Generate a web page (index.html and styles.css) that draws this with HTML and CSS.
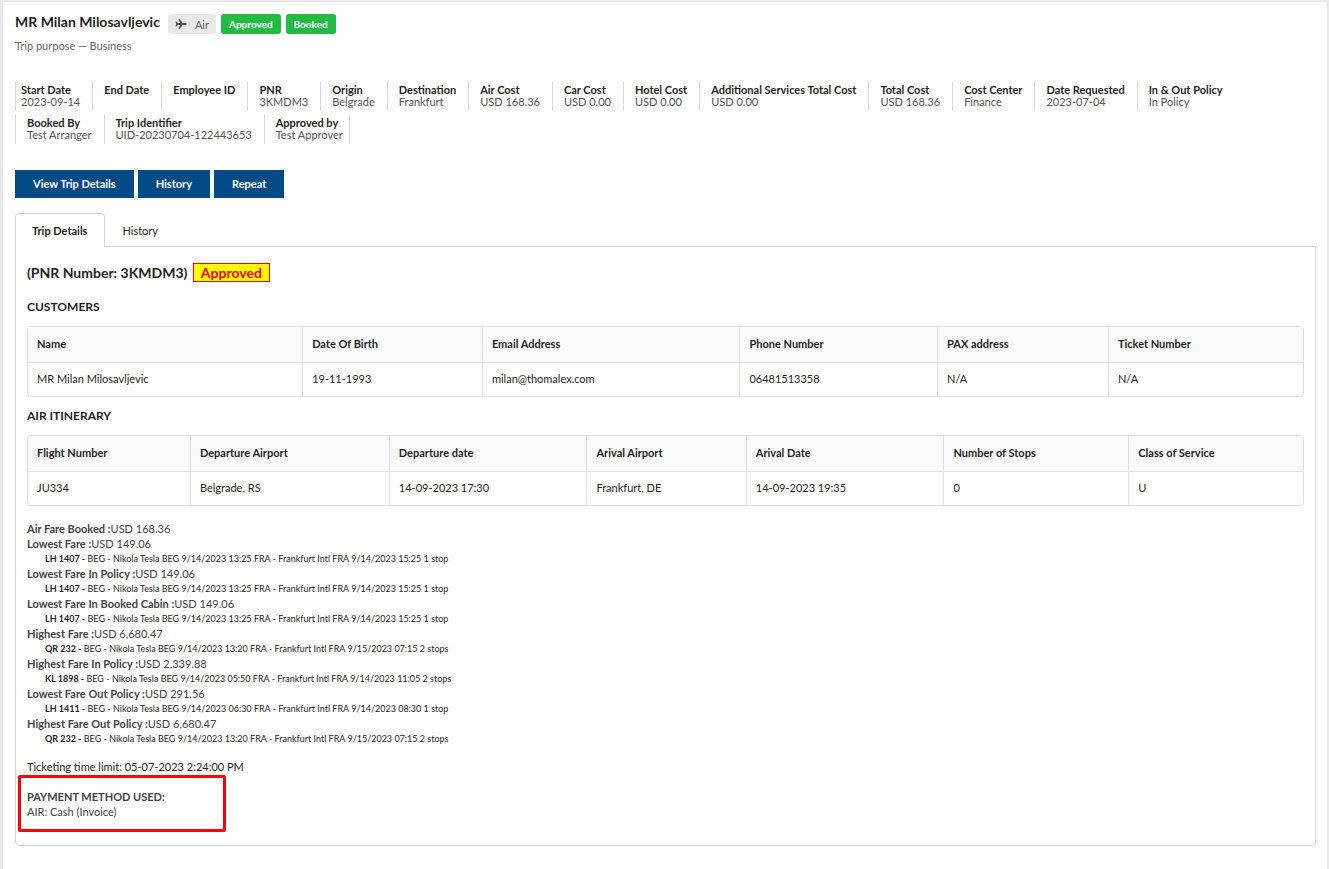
FILE: index.html
```html
<!DOCTYPE html>
<html lang="en">
<head>
  <meta charset="utf-8">
  <title>Trip Details</title>
  <link rel="stylesheet" href="styles.css">
</head>
<body>
  <main class="trip">
    <header class="trip__header">
      <h1 class="trip__name">MR Milan Milosavljevic</h1>
      <span class="label label--type">
        <svg class="label__icon" viewBox="0 0 24 24" aria-hidden="true"><path d="M23.500 12c0-1.200-1.500-2-3.200-2h-5L10 2.500H7.500L9.800 10H5.500L3.200 7H1l1.200 5L1 17h2.200l2.300-3h4.300l-2.300 7.500H10l5.300-7.500h5c1.700 0 3.200-.8 3.200-2z"/></svg>
        Air
      </span>
      <span class="label label--green">Approved</span>
      <span class="label label--green">Booked</span>
    </header>
    <p class="trip__purpose">Trip purpose — Business</p>

    <dl class="summary">
      <div class="summary__item summary__item--first"><dt>Start Date</dt><dd>2023-09-14</dd></div>
      <div class="summary__item"><dt>End Date</dt><dd></dd></div>
      <div class="summary__item"><dt>Employee ID</dt><dd></dd></div>
      <div class="summary__item"><dt>PNR</dt><dd>3KMDM3</dd></div>
      <div class="summary__item"><dt>Origin</dt><dd>Belgrade</dd></div>
      <div class="summary__item"><dt>Destination</dt><dd>Frankfurt</dd></div>
      <div class="summary__item"><dt>Air Cost</dt><dd>USD 168.36</dd></div>
      <div class="summary__item"><dt>Car Cost</dt><dd>USD 0.00</dd></div>
      <div class="summary__item"><dt>Hotel Cost</dt><dd>USD 0.00</dd></div>
      <div class="summary__item"><dt>Additional Services Total Cost</dt><dd>USD 0.00</dd></div>
      <div class="summary__item"><dt>Total Cost</dt><dd>USD 168.36</dd></div>
      <div class="summary__item"><dt>Cost Center</dt><dd>Finance</dd></div>
      <div class="summary__item"><dt>Date Requested</dt><dd>2023-07-04</dd></div>
      <div class="summary__item summary__item--last"><dt>In &amp; Out Policy</dt><dd>In Policy</dd></div>
    </dl>
    <dl class="summary">
      <div class="summary__item summary__item--start"><dt>Booked By</dt><dd>Test Arranger</dd></div>
      <div class="summary__item"><dt>Trip Identifier</dt><dd>UID-20230704-122443653</dd></div>
      <div class="summary__item summary__item--end"><dt>Approved by</dt><dd>Test Approver</dd></div>
    </dl>

    <div class="actions">
      <button class="button" type="button">View Trip Details</button>
      <button class="button" type="button">History</button>
      <button class="button" type="button">Repeat</button>
    </div>

    <nav class="tabs">
      <a class="tabs__item tabs__item--active" href="#details">Trip Details</a>
      <a class="tabs__item" href="#history">History</a>
    </nav>

    <section class="panel" id="details">
      <h2 class="panel__title">(PNR Number: 3KMDM3) <span class="status">Approved</span></h2>

      <h3 class="panel__heading">CUSTOMERS</h3>
      <table class="table table--customers">
        <thead>
          <tr>
            <th>Name</th>
            <th>Date Of Birth</th>
            <th>Email Address</th>
            <th>Phone Number</th>
            <th>PAX address</th>
            <th>Ticket Number</th>
          </tr>
        </thead>
        <tbody>
          <tr>
            <td>MR Milan Milosavljevic</td>
            <td>19-11-1993</td>
            <td>milan@thomalex.com</td>
            <td>06481513358</td>
            <td>N/A</td>
            <td>N/A</td>
          </tr>
        </tbody>
      </table>

      <h3 class="panel__heading">AIR ITINERARY</h3>
      <table class="table table--itinerary">
        <thead>
          <tr>
            <th>Flight Number</th>
            <th>Departure Airport</th>
            <th>Departure date</th>
            <th>Arival Airport</th>
            <th>Arival Date</th>
            <th>Number of Stops</th>
            <th>Class of Service</th>
          </tr>
        </thead>
        <tbody>
          <tr>
            <td>JU334</td>
            <td>Belgrade, RS</td>
            <td>14-09-2023 17:30</td>
            <td>Frankfurt, DE</td>
            <td>14-09-2023 19:35</td>
            <td>0</td>
            <td>U</td>
          </tr>
        </tbody>
      </table>

      <div class="fares">
        <p class="fare"><b>Air Fare Booked :</b>USD 168.36</p>
        <p class="fare"><b>Lowest Fare :</b>USD 149.06</p>
        <p class="flight"><b>LH 1407 -</b> BEG - Nikola Tesla BEG 9/14/2023 13:25 FRA - Frankfurt Intl FRA 9/14/2023 15:25 1 stop</p>
        <p class="fare"><b>Lowest Fare In Policy :</b>USD 149.06</p>
        <p class="flight"><b>LH 1407 -</b> BEG - Nikola Tesla BEG 9/14/2023 13:25 FRA - Frankfurt Intl FRA 9/14/2023 15:25 1 stop</p>
        <p class="fare"><b>Lowest Fare In Booked Cabin :</b>USD 149.06</p>
        <p class="flight"><b>LH 1407 -</b> BEG - Nikola Tesla BEG 9/14/2023 13:25 FRA - Frankfurt Intl FRA 9/14/2023 15:25 1 stop</p>
        <p class="fare"><b>Highest Fare :</b>USD 6,680.47</p>
        <p class="flight"><b>QR 232 -</b> BEG - Nikola Tesla BEG 9/14/2023 13:20 FRA - Frankfurt Intl FRA 9/15/2023 07:15 2 stops</p>
        <p class="fare"><b>Highest Fare In Policy :</b>USD 2,339.88</p>
        <p class="flight"><b>KL 1898 -</b> BEG - Nikola Tesla BEG 9/14/2023 05:50 FRA - Frankfurt Intl FRA 9/14/2023 11:05 2 stops</p>
        <p class="fare"><b>Lowest Fare Out Policy :</b>USD 291.56</p>
        <p class="flight"><b>LH 1411 -</b> BEG - Nikola Tesla BEG 9/14/2023 06:30 FRA - Frankfurt Intl FRA 9/14/2023 08:30 1 stop</p>
        <p class="fare"><b>Highest Fare Out Policy :</b>USD 6,680.47</p>
        <p class="flight"><b>QR 232 -</b> BEG - Nikola Tesla BEG 9/14/2023 13:20 FRA - Frankfurt Intl FRA 9/15/2023 07:15 2 stops</p>
      </div>

      <p class="limit">Ticketing time limit: 05-07-2023 2:24:00 PM</p>
      <div class="payment">
        <p><b>PAYMENT METHOD USED:</b></p>
        <p>AIR: Cash (Invoice)</p>
      </div>
    </section>
  </main>
</body>
</html>
```
FILE: styles.css
```css
* {
  padding: 0;
  margin: 0;
  box-sizing: border-box;
}

body {
  min-height: 100vh;
  padding: 2px 2px 0 3px;
  display: flex;
  background: #e9e9e9;
  color: #1f1f20;
  font-family: Lato, "Liberation Sans", sans-serif;
  font-size: 11px;
  line-height: 15px;
}

.trip {
  flex: 1;
  min-width: 0;
  padding: 12px 11px 20px 12px;
  background: #fff;
}

.trip__header {
  display: flex;
  align-items: flex-start;
  gap: 5px;
  height: 20px;
}

.trip__name {
  margin-right: 3px;
  font-size: 14px;
  line-height: 16px;
}

.trip__purpose {
  margin-top: 4px;
  color: #666;
}

.label {
  display: flex;
  align-items: center;
  height: 20px;
  padding: 0 7px;
  border-radius: 3px;
}

.label--type {
  background: #e8e8e8;
  color: #666;
}

.label--green {
  padding: 0 8px;
  background: #21ba45;
  color: #fff;
  font-size: 10px;
  font-weight: bold;
}

.label__icon {
  width: 12px;
  height: 12px;
  margin-right: 8px;
  fill: #555;
}

/* trip facts */
.summary {
  display: flex;
  margin-top: 4px;
}

.trip__purpose + .summary {
  margin-top: 29px;
}

.summary__item {
  height: 29px;
  padding: 2px 12px 0 11px;
  border-right: 1px solid #d8d8d8;
  line-height: 12px;
  white-space: nowrap;
}

.summary__item dt {
  font-weight: bold;
}

.summary__item dd {
  color: #555;
}

.summary__item--first {
  padding-left: 5px;
  border-left: 1px solid #d8d8d8;
}

.summary__item--start {
  border-left: 1px solid #d8d8d8;
}

.summary__item--last {
  border-right: 0;
}

.summary__item--end {
  padding-right: 6px;
}

.actions {
  display: flex;
  gap: 4px;
  margin-top: 26px;
}

.button {
  height: 28px;
  padding: 0 18px 2px;
  border: 0;
  background: #004b85;
  color: #fff;
  font: bold 11px/15px Lato, "Liberation Sans", sans-serif;
  cursor: pointer;
}

/* tabs */
.tabs {
  display: flex;
  align-items: flex-start;
  height: 33px;
  margin-top: 15px;
}

.tabs__item {
  height: 34px;
  padding: 10px 17px;
  color: #1f1f20;
  text-decoration: none;
}

/* overlaps the top border of the panel */
.tabs__item--active {
  position: relative;
  z-index: 1;
  padding: 9px 17px 9px 16px;
  border: 1px solid #d4d4d5;
  border-bottom: 0;
  border-radius: 4px 4px 0 0;
  background: #fff;
  font-weight: bold;
}

.panel {
  padding: 16px 11px 13px;
  border: 1px solid #d4d4d5;
  border-radius: 0 0 4px 4px;
}

.panel__title {
  font-size: 14px;
  line-height: 19px;
}

.status {
  display: inline-block;
  margin-left: 2px;
  padding: 0 7px;
  border: 1px solid #f00;
  background: #ff0;
  color: #f00;
  line-height: 17px;
}

.panel__heading {
  margin: 11px 0 12px;
  font-size: 12px;
  line-height: 15px;
}

.panel__title + .panel__heading {
  margin-top: 17px;
}

.table {
  width: 100%;
  table-layout: fixed;
  border: 1px solid #dededf;
  border-radius: 4px;
  border-spacing: 0;
  text-align: left;
}

.table th,
.table td {
  height: 33px;
  padding: 0 9px 2px;
  border-left: 1px solid #e3e3e4;
}

.table th {
  height: 36px;
  border-bottom: 1px solid #e3e3e4;
  background: #f9fafb;
}

.table th:first-child,
.table td:first-child {
  border-left: 0;
}

.table--customers th:nth-child(1) { width: 21.5%; }
.table--customers th:nth-child(2) { width: 14.1%; }
.table--customers th:nth-child(3) { width: 20.2%; }
.table--customers th:nth-child(4) { width: 15.5%; }
.table--customers th:nth-child(5) { width: 13.4%; }

.table--itinerary th:nth-child(1) { width: 12.7%; }
.table--itinerary th:nth-child(2) { width: 15.6%; }
.table--itinerary th:nth-child(3) { width: 15.5%; }
.table--itinerary th:nth-child(4) { width: 12.5%; }
.table--itinerary th:nth-child(5) { width: 15.5%; }
.table--itinerary th:nth-child(6) { width: 14.5%; }

.fares {
  margin-top: 16px;
}

.fare {
  color: #444;
}

.fare:first-child {
  line-height: 14px;
}

.flight {
  padding-left: 18px;
  font-size: 9px;
}

.limit {
  margin-top: 13px;
}

.payment {
  width: 208px;
  margin: 1px 0 0 -9px;
  padding: 11px 6px 10px;
  border: 3px solid #f00;
  border-radius: 2px;
  color: #444;
}
```
